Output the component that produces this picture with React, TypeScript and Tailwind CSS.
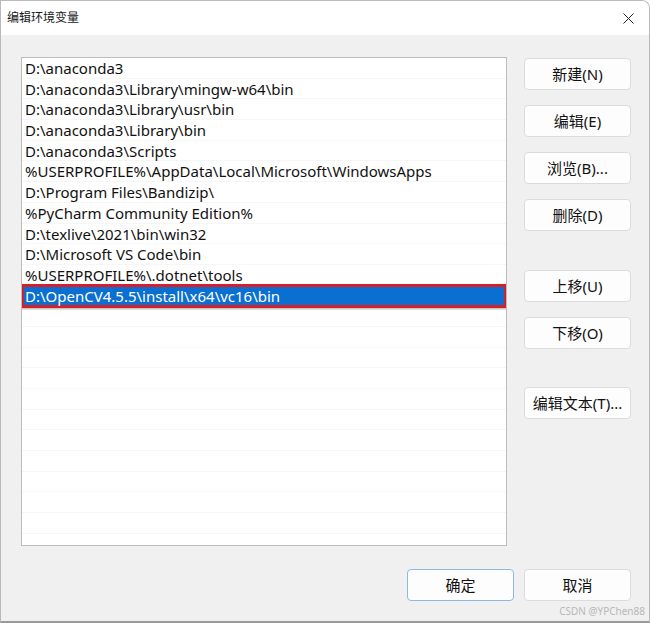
import React from "react";

const paths = [
  "D:\\anaconda3",
  "D:\\anaconda3\\Library\\mingw-w64\\bin",
  "D:\\anaconda3\\Library\\usr\\bin",
  "D:\\anaconda3\\Library\\bin",
  "D:\\anaconda3\\Scripts",
  "%USERPROFILE%\\AppData\\Local\\Microsoft\\WindowsApps",
  "D:\\Program Files\\Bandizip\\",
  "%PyCharm Community Edition%",
  "D:\\texlive\\2021\\bin\\win32",
  "D:\\Microsoft VS Code\\bin",
  "%USERPROFILE%\\.dotnet\\tools",
  "D:\\OpenCV4.5.5\\install\\x64\\vc16\\bin",
];

const font = {
  fontFamily: '"Noto Sans", "Noto Sans CJK SC", sans-serif',
};

function Btn({ label, primary }: { label: string; primary?: boolean }) {
  return (
    <div
      className={
        "w-[107px] h-[32px] flex items-center justify-center rounded-[4px] bg-[#fdfdfd] text-[15px] text-[#111] border " +
        (primary ? "border-[#8fb8de]" : "border-[#dcdcdc]")
      }
    >
      {label}
    </div>
  );
}

export default function App() {
  const rows = Array.from({ length: 24 }, (_, i) => paths[i] ?? "");
  return (
    <div
      className="w-[650px] h-[623px] bg-[#f0f0f0] flex flex-col rounded-tr-[8px] border border-[#b9b9b9] border-b-[2px] border-b-[#9a9a9a] overflow-hidden relative"
      style={font}
    >
      <div className="h-[34px] bg-white flex items-center justify-between pl-[6px] pr-[16px] shrink-0">
        <span className="text-[12px] text-[#1a1a1a]">编辑环境变量</span>
        <svg width="11" height="11" viewBox="0 0 11 11" className="mr-[-1px]">
          <path d="M0.5 0.5 L10.5 10.5 M10.5 0.5 L0.5 10.5" stroke="#222" strokeWidth="1" />
        </svg>
      </div>
      <div className="flex pl-[20px] pt-[22px]">
        <div className="w-[486px] h-[489px] bg-white border border-[#bcbcbc] overflow-hidden">
          {rows.map((p, i) => {
            const sel = i === 11;
            return (
              <div key={i} className="h-[20.7px] relative">
                {sel ? (
                  <>
                    <div className="absolute -left-[1px] -right-[1px] -top-[2px] -bottom-[2px] border-[3px] border-[#d61f26] shadow-[0_1px_2px_rgba(0,0,0,0.35)] bg-[#0a6fd0]" />
                    <div className="relative pl-[3px] text-[15px] leading-[20.7px] text-white whitespace-nowrap">
                      {p}
                    </div>
                  </>
                ) : (
                  <div className="pl-[3px] text-[15px] leading-[20.7px] text-[#111] whitespace-nowrap border-b border-[#f6f6f6] h-full">
                    {p}
                  </div>
                )}
              </div>
            );
          })}
        </div>
        <div className="ml-[17px] pt-[1px] flex flex-col">
          <div className="flex flex-col gap-[15px]">
            <Btn label="新建(N)" />
            <Btn label="编辑(E)" />
            <Btn label="浏览(B)..." />
            <Btn label="删除(D)" />
          </div>
          <div className="mt-[39px] flex flex-col gap-[15px]">
            <Btn label="上移(U)" />
            <Btn label="下移(O)" />
          </div>
          <div className="mt-[38px]">
            <Btn label="编辑文本(T)..." />
          </div>
        </div>
      </div>
      <div className="flex justify-end gap-[10px] pr-[18px] mt-[23px]">
        <Btn label="确定" primary />
        <Btn label="取消" />
      </div>
      <div className="absolute right-[4px] bottom-[2px] text-[10px] text-[#b8b8b8]">CSDN @YPChen88</div>
    </div>
  );
}
